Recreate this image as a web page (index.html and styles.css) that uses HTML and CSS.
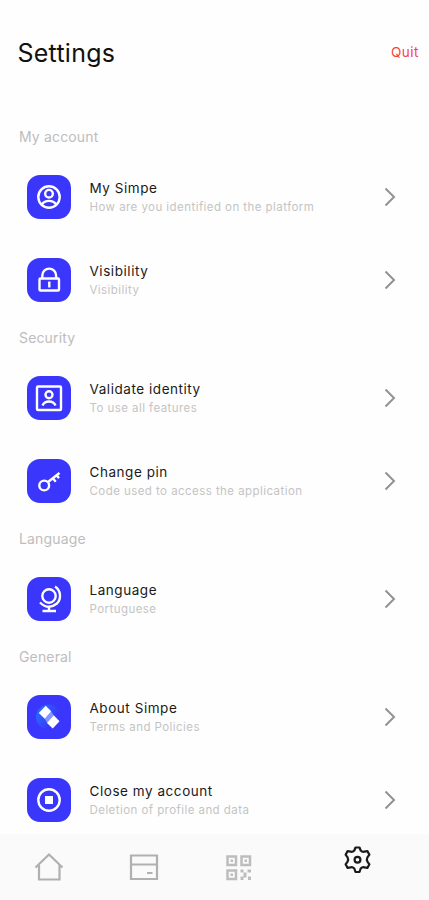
FILE: index.html
```
<!DOCTYPE html>
<html lang="en">
    <head>
        <meta charset="UTF-8" />
        <meta name="viewport" content="width=device-width, initial-scale=1.0" />
        <title>Settings</title>
        <link rel="stylesheet" href="styles.css">
    </head>
    <body>
        <header>
            <h1>Settings</h1>
            <a class="quit">Quit</a>
        </header>

        <main>
            <h2>My account</h2>
            <div class="row">
                <div class="icon">
                    <svg width="44" height="44" viewBox="0 0 44 44">
                        <circle cx="22" cy="22" r="10.7" />
                        <circle cx="22" cy="18.7" r="3.8" />
                        <path d="M14.8 29.4c1.8-2.5 4.2-3.5 7.2-3.5s5.4 1 7.2 3.5" />
                    </svg>
                </div>
                <div class="info">
                    <h3>My Simpe</h3>
                    <p>How are you identified on the platform</p>
                </div>
                <svg class="arrow" width="12" height="20" viewBox="0 0 12 20"><path d="M1.5 1.5 10 10l-8.5 8.5" /></svg>
            </div>
            <div class="row">
                <div class="icon">
                    <svg width="44" height="44" viewBox="0 0 44 44">
                        <rect x="12.5" y="20.5" width="19.5" height="12" rx="1" />
                        <path d="M15.3 20v-2.500a6.9 6.9 0 0 1 13.8 0V20" />
                        <path d="M22.3 23.500v6" />
                    </svg>
                </div>
                <div class="info">
                    <h3>Visibility</h3>
                    <p>Visibility</p>
                </div>
                <svg class="arrow" width="12" height="20" viewBox="0 0 12 20"><path d="M1.5 1.5 10 10l-8.5 8.5" /></svg>
            </div>

            <h2>Security</h2>
            <div class="row">
                <div class="icon">
                    <svg width="44" height="44" viewBox="0 0 44 44">
                        <rect x="10" y="10.5" width="24" height="23.5" rx="1" />
                        <circle cx="22" cy="18.7" r="3.5" />
                        <path d="M15.5 29.5c1.2-2.8 3.5-4 6.5-4s5.3 1.2 6.5 4" />
                    </svg>
                </div>
                <div class="info">
                    <h3>Validate identity</h3>
                    <p>To use all features</p>
                </div>
                <svg class="arrow" width="12" height="20" viewBox="0 0 12 20"><path d="M1.5 1.5 10 10l-8.5 8.5" /></svg>
            </div>
            <div class="row">
                <div class="icon">
                    <svg width="44" height="44" viewBox="0 0 44 44">
                        <circle cx="17.2" cy="26.5" r="4.9" />
                        <path d="M21 23 32.5 14M26 19.500l2.8 3.200M29.800 16.500l2.200 2.600" />
                    </svg>
                </div>
                <div class="info">
                    <h3>Change pin</h3>
                    <p>Code used to access the application</p>
                </div>
                <svg class="arrow" width="12" height="20" viewBox="0 0 12 20"><path d="M1.5 1.5 10 10l-8.5 8.5" /></svg>
            </div>

            <h2>Language</h2>
            <div class="row">
                <div class="icon">
                    <svg width="44" height="44" viewBox="0 0 44 44">
                        <circle cx="22" cy="19" r="6.7" />
                        <path d="M28 9.500A11.200 11.200 0 0 1 30 26.500Q21 33.500 13 25.500M22 30v4M15.500 34h13.500" />
                    </svg>
                </div>
                <div class="info">
                    <h3>Language</h3>
                    <p>Portuguese</p>
                </div>
                <svg class="arrow" width="12" height="20" viewBox="0 0 12 20"><path d="M1.5 1.5 10 10l-8.5 8.5" /></svg>
            </div>

            <h2>General</h2>
            <div class="row">
                <div class="icon">
                    <svg class="logo" width="44" height="44" viewBox="0 0 44 44">
                        <defs>
                            <linearGradient id="glow" x1="0" y1="0" x2="1" y2="0.6">
                                <stop offset="0" stop-color="#2478ff" />
                                <stop offset="0.8" stop-color="#3a36fb" />
                            </linearGradient>
                        </defs>
                        <circle cx="21.5" cy="22" r="12.5" fill="url(#glow)" />
                        <path d="M24 16.3 26.7 20.3 20.3 28.3 17.7 23.7z" fill="#8496ff" />
                        <path d="M18.7 10.8 24.2 16.3 17.7 23.7 11.8 18z" fill="#fff" />
                        <path d="M26.7 20.3 32.5 26.3 25.7 33.6 20 28z" fill="#fff" />
                    </svg>
                </div>
                <div class="info">
                    <h3>About Simpe</h3>
                    <p>Terms and Policies</p>
                </div>
                <svg class="arrow" width="12" height="20" viewBox="0 0 12 20"><path d="M1.5 1.5 10 10l-8.5 8.5" /></svg>
            </div>
            <div class="row">
                <div class="icon">
                    <svg width="44" height="44" viewBox="0 0 44 44">
                        <circle cx="22" cy="22" r="10.7" />
                        <rect x="18" y="18" width="8" height="8" fill="#fff" stroke="none" />
                    </svg>
                </div>
                <div class="info">
                    <h3>Close my account</h3>
                    <p>Deletion of profile and data</p>
                </div>
                <svg class="arrow" width="12" height="20" viewBox="0 0 12 20"><path d="M1.5 1.5 10 10l-8.5 8.5" /></svg>
            </div>
        </main>

        <nav>
            <svg width="30" height="30" viewBox="0 0 30 30">
                <path d="M1.500 15.500 15 2.500l13.500 13M5 13v14.500h20.500V13" />
            </svg>
            <svg width="30" height="30" viewBox="0 0 30 30">
                <path d="M2 3.500h26v23.500H2zM2 12.500h26M18 21h5.500" />
            </svg>
            <svg class="qr" width="30" height="30" viewBox="0 0 30 30">
                <path d="M3.500 4.500h8.500V13H3.500zM17.500 4.500H26V13h-8.500zM3.500 18.500H12V27H3.500z" />
                <path class="dots" d="M6.500 7.500H9V10H6.500zM20.500 7.500H23V10h-2.500zM6.500 21.500H9V24H6.500zM16.500 17.500h3v3h-3zM19.500 20.500h3v3h-3zM23.500 17.500H27v3h-3.500zM16.500 24.500h3V28h-3zM19.500 23.500h3v2h-3zM24 24.500h3V28h-3z" />
            </svg>
            <svg class="active" width="30" height="30" viewBox="0 0 30 30">
                <path d="M12.500 2.500h4l1.200 3q1.500 1.600 3.500 1.200l3.200-.6 2 3.600-2 2.700q-1 2.100 0 4.200l2 2.700-2 3.600-3.200-.6q-2-.4-3.500 1.200l-1.200 3.500h-4l-1.200-3.500q-1.500-1.600-3.500-1.200l-3.200.6-2-3.600 2-2.700q1-2.100 0-4.200l-2-2.700 2-3.600 3.200.6q2 .4 3.500-1.200z" />
                <circle cx="14.500" cy="14.800" r="2.900" />
            </svg>
        </nav>
    </body>
</html>
```

FILE: styles.css
```
* {
    box-sizing: border-box;
    margin: 0;
    padding: 0;
}

body {
    display: flex;
    flex-direction: column;
    height: 900px;
    overflow: hidden;
    background: #fefefe;
    font-family: Inter, "Liberation Sans", sans-serif;
}

header {
    display: flex;
    justify-content: space-between;
    align-items: center;
    height: 105px;
    padding: 0 10px 0 17.5px;
}

h1 {
    font-size: 25px;
    font-weight: 400;
    letter-spacing: 0.25px;
    color: #111;
}

.quit {
    padding-bottom: 1px;
    font-size: 13.5px;
    letter-spacing: 0.5px;
    color: #f2453f;
}

main {
    flex: 1;
    min-height: 0;
    padding-top: 15.3px;
    overflow: hidden;
}

h2 {
    height: 34.9px;
    padding-left: 19px;
    font-size: 14px;
    line-height: 34.9px;
    font-weight: 400;
    letter-spacing: 0.15px;
    color: #bdbdbd;
}

.row {
    display: flex;
    align-items: center;
    height: 83.1px;
    padding: 0 33px 0 27px;
}

.icon {
    width: 44px;
    height: 44px;
    border-radius: 13px;
    background: #3a36fb;
}

svg {
    display: block;
    fill: none;
    stroke: #fff;
    stroke-width: 2.4;
}

.logo {
    stroke: none;
}

.info {
    flex: 1;
    padding-left: 18.5px;
}

h3 {
    font-size: 13.5px;
    line-height: 20px;
    font-weight: 400;
    letter-spacing: 0.55px;
    color: #1a1a1a;
}

p {
    font-size: 11.5px;
    line-height: 18px;
    letter-spacing: 0.44px;
    color: #c4c4c4;
}

.arrow {
    stroke: #929292;
    stroke-width: 2;
}

nav {
    display: flex;
    gap: 65px;
    height: 66px;
    padding: 18px 0 0 34px;
    background: #fafafa;
}

nav svg {
    stroke: #b0b0b0;
    stroke-width: 2.2;
}

nav .qr {
    stroke: #bdbdbd;
    stroke-width: 2.5;
}

.dots {
    fill: #bdbdbd;
    stroke: none;
}

nav .active {
    margin: -7px 0 0 24px;
    stroke: #1a1a1a;
    stroke-width: 2.2;
    stroke-linejoin: round;
}
```
